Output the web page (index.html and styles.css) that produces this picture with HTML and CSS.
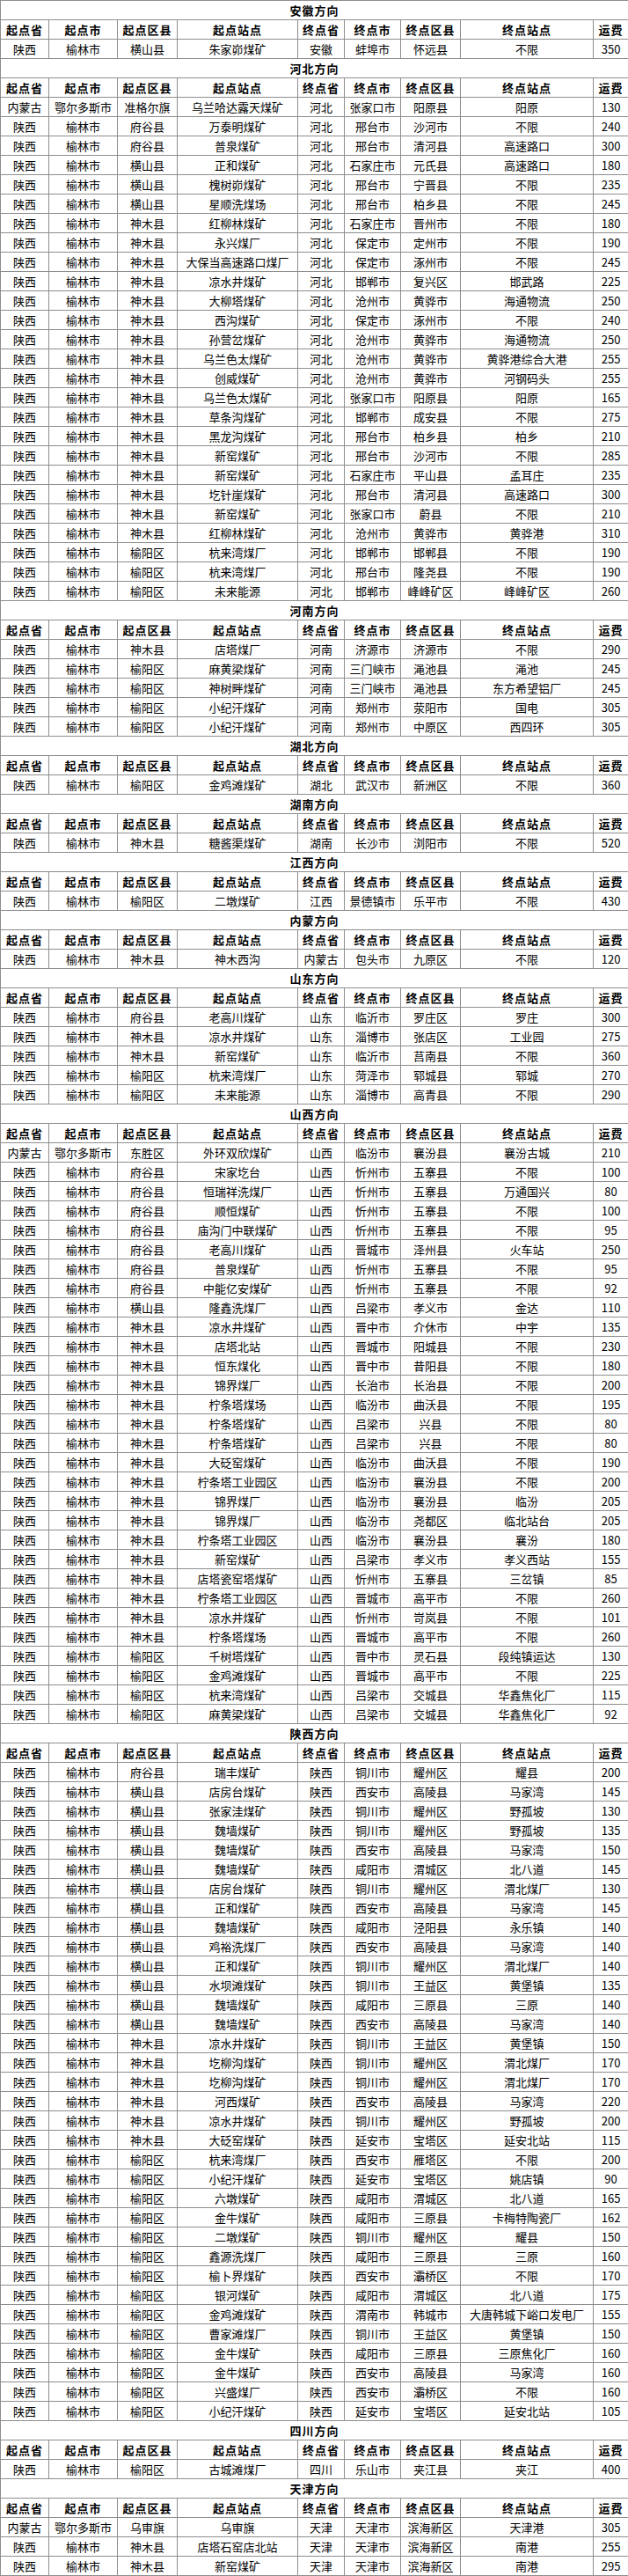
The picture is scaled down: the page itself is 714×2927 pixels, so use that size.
FILE: index.html
```html
<!DOCTYPE html>
<html lang="zh-CN">
<head>
<meta charset="utf-8">
<title>运费表</title>
<link rel="stylesheet" href="styles.css">
</head>
<body>
<table class="freight">
<colgroup>
<col class="c-prov"><col class="c-city"><col class="c-county"><col class="c-site"><col class="c-eprov"><col class="c-ecity"><col class="c-ecounty"><col class="c-esite"><col class="c-fee">
</colgroup>
<tbody>
<tr class="title"><td colspan="9">安徽方向</td></tr>
<tr class="head"><th>起点省</th><th>起点市</th><th>起点区县</th><th>起点站点</th><th>终点省</th><th>终点市</th><th>终点区县</th><th>终点站点</th><th>运费</th></tr>
<tr><td>陕西</td><td>榆林市</td><td>横山县</td><td>朱家峁煤矿</td><td>安徽</td><td>蚌埠市</td><td>怀远县</td><td>不限</td><td>350</td></tr>

<tr class="title"><td colspan="9">河北方向</td></tr>
<tr class="head"><th>起点省</th><th>起点市</th><th>起点区县</th><th>起点站点</th><th>终点省</th><th>终点市</th><th>终点区县</th><th>终点站点</th><th>运费</th></tr>
<tr><td>内蒙古</td><td>鄂尔多斯市</td><td>准格尔旗</td><td>乌兰哈达露天煤矿</td><td>河北</td><td>张家口市</td><td>阳原县</td><td>阳原</td><td>130</td></tr>
<tr><td>陕西</td><td>榆林市</td><td>府谷县</td><td>万泰明煤矿</td><td>河北</td><td>邢台市</td><td>沙河市</td><td>不限</td><td>240</td></tr>
<tr><td>陕西</td><td>榆林市</td><td>府谷县</td><td>普泉煤矿</td><td>河北</td><td>邢台市</td><td>清河县</td><td>高速路口</td><td>300</td></tr>
<tr><td>陕西</td><td>榆林市</td><td>横山县</td><td>正和煤矿</td><td>河北</td><td>石家庄市</td><td>元氏县</td><td>高速路口</td><td>180</td></tr>
<tr><td>陕西</td><td>榆林市</td><td>横山县</td><td>槐树峁煤矿</td><td>河北</td><td>邢台市</td><td>宁晋县</td><td>不限</td><td>235</td></tr>
<tr><td>陕西</td><td>榆林市</td><td>横山县</td><td>星顺洗煤场</td><td>河北</td><td>邢台市</td><td>柏乡县</td><td>不限</td><td>245</td></tr>
<tr><td>陕西</td><td>榆林市</td><td>神木县</td><td>红柳林煤矿</td><td>河北</td><td>石家庄市</td><td>晋州市</td><td>不限</td><td>180</td></tr>
<tr><td>陕西</td><td>榆林市</td><td>神木县</td><td>永兴煤厂</td><td>河北</td><td>保定市</td><td>定州市</td><td>不限</td><td>190</td></tr>
<tr><td>陕西</td><td>榆林市</td><td>神木县</td><td>大保当高速路口煤厂</td><td>河北</td><td>保定市</td><td>涿州市</td><td>不限</td><td>245</td></tr>
<tr><td>陕西</td><td>榆林市</td><td>神木县</td><td>凉水井煤矿</td><td>河北</td><td>邯郸市</td><td>复兴区</td><td>邯武路</td><td>225</td></tr>
<tr><td>陕西</td><td>榆林市</td><td>神木县</td><td>大柳塔煤矿</td><td>河北</td><td>沧州市</td><td>黄骅市</td><td>海通物流</td><td>250</td></tr>
<tr><td>陕西</td><td>榆林市</td><td>神木县</td><td>西沟煤矿</td><td>河北</td><td>保定市</td><td>涿州市</td><td>不限</td><td>240</td></tr>
<tr><td>陕西</td><td>榆林市</td><td>神木县</td><td>孙营岔煤矿</td><td>河北</td><td>沧州市</td><td>黄骅市</td><td>海通物流</td><td>250</td></tr>
<tr><td>陕西</td><td>榆林市</td><td>神木县</td><td>乌兰色太煤矿</td><td>河北</td><td>沧州市</td><td>黄骅市</td><td>黄骅港综合大港</td><td>255</td></tr>
<tr><td>陕西</td><td>榆林市</td><td>神木县</td><td>创威煤矿</td><td>河北</td><td>沧州市</td><td>黄骅市</td><td>河钢码头</td><td>255</td></tr>
<tr><td>陕西</td><td>榆林市</td><td>神木县</td><td>乌兰色太煤矿</td><td>河北</td><td>张家口市</td><td>阳原县</td><td>阳原</td><td>165</td></tr>
<tr><td>陕西</td><td>榆林市</td><td>神木县</td><td>草条沟煤矿</td><td>河北</td><td>邯郸市</td><td>成安县</td><td>不限</td><td>275</td></tr>
<tr><td>陕西</td><td>榆林市</td><td>神木县</td><td>黑龙沟煤矿</td><td>河北</td><td>邢台市</td><td>柏乡县</td><td>柏乡</td><td>210</td></tr>
<tr><td>陕西</td><td>榆林市</td><td>神木县</td><td>新窑煤矿</td><td>河北</td><td>邢台市</td><td>沙河市</td><td>不限</td><td>285</td></tr>
<tr><td>陕西</td><td>榆林市</td><td>神木县</td><td>新窑煤矿</td><td>河北</td><td>石家庄市</td><td>平山县</td><td>孟耳庄</td><td>235</td></tr>
<tr><td>陕西</td><td>榆林市</td><td>神木县</td><td>圪针崖煤矿</td><td>河北</td><td>邢台市</td><td>清河县</td><td>高速路口</td><td>300</td></tr>
<tr><td>陕西</td><td>榆林市</td><td>神木县</td><td>新窑煤矿</td><td>河北</td><td>张家口市</td><td>蔚县</td><td>不限</td><td>210</td></tr>
<tr><td>陕西</td><td>榆林市</td><td>神木县</td><td>红柳林煤矿</td><td>河北</td><td>沧州市</td><td>黄骅市</td><td>黄骅港</td><td>310</td></tr>
<tr><td>陕西</td><td>榆林市</td><td>榆阳区</td><td>杭来湾煤厂</td><td>河北</td><td>邯郸市</td><td>邯郸县</td><td>不限</td><td>190</td></tr>
<tr><td>陕西</td><td>榆林市</td><td>榆阳区</td><td>杭来湾煤厂</td><td>河北</td><td>邢台市</td><td>隆尧县</td><td>不限</td><td>190</td></tr>
<tr><td>陕西</td><td>榆林市</td><td>榆阳区</td><td>未来能源</td><td>河北</td><td>邯郸市</td><td>峰峰矿区</td><td>峰峰矿区</td><td>260</td></tr>

<tr class="title"><td colspan="9">河南方向</td></tr>
<tr class="head"><th>起点省</th><th>起点市</th><th>起点区县</th><th>起点站点</th><th>终点省</th><th>终点市</th><th>终点区县</th><th>终点站点</th><th>运费</th></tr>
<tr><td>陕西</td><td>榆林市</td><td>神木县</td><td>店塔煤厂</td><td>河南</td><td>济源市</td><td>济源市</td><td>不限</td><td>290</td></tr>
<tr><td>陕西</td><td>榆林市</td><td>榆阳区</td><td>麻黄梁煤矿</td><td>河南</td><td>三门峡市</td><td>渑池县</td><td>渑池</td><td>245</td></tr>
<tr><td>陕西</td><td>榆林市</td><td>榆阳区</td><td>神树畔煤矿</td><td>河南</td><td>三门峡市</td><td>渑池县</td><td>东方希望铝厂</td><td>245</td></tr>
<tr><td>陕西</td><td>榆林市</td><td>榆阳区</td><td>小纪汗煤矿</td><td>河南</td><td>郑州市</td><td>荥阳市</td><td>国电</td><td>305</td></tr>
<tr><td>陕西</td><td>榆林市</td><td>榆阳区</td><td>小纪汗煤矿</td><td>河南</td><td>郑州市</td><td>中原区</td><td>西四环</td><td>305</td></tr>

<tr class="title"><td colspan="9">湖北方向</td></tr>
<tr class="head"><th>起点省</th><th>起点市</th><th>起点区县</th><th>起点站点</th><th>终点省</th><th>终点市</th><th>终点区县</th><th>终点站点</th><th>运费</th></tr>
<tr><td>陕西</td><td>榆林市</td><td>榆阳区</td><td>金鸡滩煤矿</td><td>湖北</td><td>武汉市</td><td>新洲区</td><td>不限</td><td>360</td></tr>

<tr class="title"><td colspan="9">湖南方向</td></tr>
<tr class="head"><th>起点省</th><th>起点市</th><th>起点区县</th><th>起点站点</th><th>终点省</th><th>终点市</th><th>终点区县</th><th>终点站点</th><th>运费</th></tr>
<tr><td>陕西</td><td>榆林市</td><td>神木县</td><td>糖酱渠煤矿</td><td>湖南</td><td>长沙市</td><td>浏阳市</td><td>不限</td><td>520</td></tr>

<tr class="title"><td colspan="9">江西方向</td></tr>
<tr class="head"><th>起点省</th><th>起点市</th><th>起点区县</th><th>起点站点</th><th>终点省</th><th>终点市</th><th>终点区县</th><th>终点站点</th><th>运费</th></tr>
<tr><td>陕西</td><td>榆林市</td><td>榆阳区</td><td>二墩煤矿</td><td>江西</td><td>景德镇市</td><td>乐平市</td><td>不限</td><td>430</td></tr>

<tr class="title"><td colspan="9">内蒙方向</td></tr>
<tr class="head"><th>起点省</th><th>起点市</th><th>起点区县</th><th>起点站点</th><th>终点省</th><th>终点市</th><th>终点区县</th><th>终点站点</th><th>运费</th></tr>
<tr><td>陕西</td><td>榆林市</td><td>神木县</td><td>神木西沟</td><td>内蒙古</td><td>包头市</td><td>九原区</td><td>不限</td><td>120</td></tr>

<tr class="title"><td colspan="9">山东方向</td></tr>
<tr class="head"><th>起点省</th><th>起点市</th><th>起点区县</th><th>起点站点</th><th>终点省</th><th>终点市</th><th>终点区县</th><th>终点站点</th><th>运费</th></tr>
<tr><td>陕西</td><td>榆林市</td><td>府谷县</td><td>老高川煤矿</td><td>山东</td><td>临沂市</td><td>罗庄区</td><td>罗庄</td><td>300</td></tr>
<tr><td>陕西</td><td>榆林市</td><td>神木县</td><td>凉水井煤矿</td><td>山东</td><td>淄博市</td><td>张店区</td><td>工业园</td><td>275</td></tr>
<tr><td>陕西</td><td>榆林市</td><td>神木县</td><td>新窑煤矿</td><td>山东</td><td>临沂市</td><td>莒南县</td><td>不限</td><td>360</td></tr>
<tr><td>陕西</td><td>榆林市</td><td>榆阳区</td><td>杭来湾煤厂</td><td>山东</td><td>菏泽市</td><td>郓城县</td><td>郓城</td><td>270</td></tr>
<tr><td>陕西</td><td>榆林市</td><td>榆阳区</td><td>未来能源</td><td>山东</td><td>淄博市</td><td>高青县</td><td>不限</td><td>290</td></tr>

<tr class="title"><td colspan="9">山西方向</td></tr>
<tr class="head"><th>起点省</th><th>起点市</th><th>起点区县</th><th>起点站点</th><th>终点省</th><th>终点市</th><th>终点区县</th><th>终点站点</th><th>运费</th></tr>
<tr><td>内蒙古</td><td>鄂尔多斯市</td><td>东胜区</td><td>外环双欣煤矿</td><td>山西</td><td>临汾市</td><td>襄汾县</td><td>襄汾古城</td><td>210</td></tr>
<tr><td>陕西</td><td>榆林市</td><td>府谷县</td><td>宋家圪台</td><td>山西</td><td>忻州市</td><td>五寨县</td><td>不限</td><td>100</td></tr>
<tr><td>陕西</td><td>榆林市</td><td>府谷县</td><td>恒瑞祥洗煤厂</td><td>山西</td><td>忻州市</td><td>五寨县</td><td>万通国兴</td><td>80</td></tr>
<tr><td>陕西</td><td>榆林市</td><td>府谷县</td><td>顺恒煤矿</td><td>山西</td><td>忻州市</td><td>五寨县</td><td>不限</td><td>100</td></tr>
<tr><td>陕西</td><td>榆林市</td><td>府谷县</td><td>庙沟门中联煤矿</td><td>山西</td><td>忻州市</td><td>五寨县</td><td>不限</td><td>95</td></tr>
<tr><td>陕西</td><td>榆林市</td><td>府谷县</td><td>老高川煤矿</td><td>山西</td><td>晋城市</td><td>泽州县</td><td>火车站</td><td>250</td></tr>
<tr><td>陕西</td><td>榆林市</td><td>府谷县</td><td>普泉煤矿</td><td>山西</td><td>忻州市</td><td>五寨县</td><td>不限</td><td>95</td></tr>
<tr><td>陕西</td><td>榆林市</td><td>府谷县</td><td>中能亿安煤矿</td><td>山西</td><td>忻州市</td><td>五寨县</td><td>不限</td><td>92</td></tr>
<tr><td>陕西</td><td>榆林市</td><td>横山县</td><td>隆鑫洗煤厂</td><td>山西</td><td>吕梁市</td><td>孝义市</td><td>金达</td><td>110</td></tr>
<tr><td>陕西</td><td>榆林市</td><td>神木县</td><td>凉水井煤矿</td><td>山西</td><td>晋中市</td><td>介休市</td><td>中宇</td><td>135</td></tr>
<tr><td>陕西</td><td>榆林市</td><td>神木县</td><td>店塔北站</td><td>山西</td><td>晋城市</td><td>阳城县</td><td>不限</td><td>230</td></tr>
<tr><td>陕西</td><td>榆林市</td><td>神木县</td><td>恒东煤化</td><td>山西</td><td>晋中市</td><td>昔阳县</td><td>不限</td><td>180</td></tr>
<tr><td>陕西</td><td>榆林市</td><td>神木县</td><td>锦界煤厂</td><td>山西</td><td>长治市</td><td>长治县</td><td>不限</td><td>200</td></tr>
<tr><td>陕西</td><td>榆林市</td><td>神木县</td><td>柠条塔煤场</td><td>山西</td><td>临汾市</td><td>曲沃县</td><td>不限</td><td>195</td></tr>
<tr><td>陕西</td><td>榆林市</td><td>神木县</td><td>柠条塔煤矿</td><td>山西</td><td>吕梁市</td><td>兴县</td><td>不限</td><td>80</td></tr>
<tr><td>陕西</td><td>榆林市</td><td>神木县</td><td>柠条塔煤矿</td><td>山西</td><td>吕梁市</td><td>兴县</td><td>不限</td><td>80</td></tr>
<tr><td>陕西</td><td>榆林市</td><td>神木县</td><td>大砭窑煤矿</td><td>山西</td><td>临汾市</td><td>曲沃县</td><td>不限</td><td>190</td></tr>
<tr><td>陕西</td><td>榆林市</td><td>神木县</td><td>柠条塔工业园区</td><td>山西</td><td>临汾市</td><td>襄汾县</td><td>不限</td><td>200</td></tr>
<tr><td>陕西</td><td>榆林市</td><td>神木县</td><td>锦界煤厂</td><td>山西</td><td>临汾市</td><td>襄汾县</td><td>临汾</td><td>205</td></tr>
<tr><td>陕西</td><td>榆林市</td><td>神木县</td><td>锦界煤厂</td><td>山西</td><td>临汾市</td><td>尧都区</td><td>临北站台</td><td>205</td></tr>
<tr><td>陕西</td><td>榆林市</td><td>神木县</td><td>柠条塔工业园区</td><td>山西</td><td>临汾市</td><td>襄汾县</td><td>襄汾</td><td>180</td></tr>
<tr><td>陕西</td><td>榆林市</td><td>神木县</td><td>新窑煤矿</td><td>山西</td><td>吕梁市</td><td>孝义市</td><td>孝义西站</td><td>155</td></tr>
<tr><td>陕西</td><td>榆林市</td><td>神木县</td><td>店塔瓷窑塔煤矿</td><td>山西</td><td>忻州市</td><td>五寨县</td><td>三岔镇</td><td>85</td></tr>
<tr><td>陕西</td><td>榆林市</td><td>神木县</td><td>柠条塔工业园区</td><td>山西</td><td>晋城市</td><td>高平市</td><td>不限</td><td>260</td></tr>
<tr><td>陕西</td><td>榆林市</td><td>神木县</td><td>凉水井煤矿</td><td>山西</td><td>忻州市</td><td>岢岚县</td><td>不限</td><td>101</td></tr>
<tr><td>陕西</td><td>榆林市</td><td>神木县</td><td>柠条塔煤场</td><td>山西</td><td>晋城市</td><td>高平市</td><td>不限</td><td>260</td></tr>
<tr><td>陕西</td><td>榆林市</td><td>榆阳区</td><td>千树塔煤矿</td><td>山西</td><td>晋中市</td><td>灵石县</td><td>段纯镇运达</td><td>130</td></tr>
<tr><td>陕西</td><td>榆林市</td><td>榆阳区</td><td>金鸡滩煤矿</td><td>山西</td><td>晋城市</td><td>高平市</td><td>不限</td><td>225</td></tr>
<tr><td>陕西</td><td>榆林市</td><td>榆阳区</td><td>杭来湾煤矿</td><td>山西</td><td>吕梁市</td><td>交城县</td><td>华鑫焦化厂</td><td>115</td></tr>
<tr><td>陕西</td><td>榆林市</td><td>榆阳区</td><td>麻黄梁煤矿</td><td>山西</td><td>吕梁市</td><td>交城县</td><td>华鑫焦化厂</td><td>92</td></tr>

<tr class="title"><td colspan="9">陕西方向</td></tr>
<tr class="head"><th>起点省</th><th>起点市</th><th>起点区县</th><th>起点站点</th><th>终点省</th><th>终点市</th><th>终点区县</th><th>终点站点</th><th>运费</th></tr>
<tr><td>陕西</td><td>榆林市</td><td>府谷县</td><td>瑞丰煤矿</td><td>陕西</td><td>铜川市</td><td>耀州区</td><td>耀县</td><td>200</td></tr>
<tr><td>陕西</td><td>榆林市</td><td>横山县</td><td>店房台煤矿</td><td>陕西</td><td>西安市</td><td>高陵县</td><td>马家湾</td><td>145</td></tr>
<tr><td>陕西</td><td>榆林市</td><td>横山县</td><td>张家洼煤矿</td><td>陕西</td><td>铜川市</td><td>耀州区</td><td>野孤坡</td><td>130</td></tr>
<tr><td>陕西</td><td>榆林市</td><td>横山县</td><td>魏墙煤矿</td><td>陕西</td><td>铜川市</td><td>耀州区</td><td>野孤坡</td><td>135</td></tr>
<tr><td>陕西</td><td>榆林市</td><td>横山县</td><td>魏墙煤矿</td><td>陕西</td><td>西安市</td><td>高陵县</td><td>马家湾</td><td>150</td></tr>
<tr><td>陕西</td><td>榆林市</td><td>横山县</td><td>魏墙煤矿</td><td>陕西</td><td>咸阳市</td><td>渭城区</td><td>北八道</td><td>145</td></tr>
<tr><td>陕西</td><td>榆林市</td><td>横山县</td><td>店房台煤矿</td><td>陕西</td><td>铜川市</td><td>耀州区</td><td>渭北煤厂</td><td>130</td></tr>
<tr><td>陕西</td><td>榆林市</td><td>横山县</td><td>正和煤矿</td><td>陕西</td><td>西安市</td><td>高陵县</td><td>马家湾</td><td>145</td></tr>
<tr><td>陕西</td><td>榆林市</td><td>横山县</td><td>魏墙煤矿</td><td>陕西</td><td>咸阳市</td><td>泾阳县</td><td>永乐镇</td><td>140</td></tr>
<tr><td>陕西</td><td>榆林市</td><td>横山县</td><td>鸡裕洗煤厂</td><td>陕西</td><td>西安市</td><td>高陵县</td><td>马家湾</td><td>140</td></tr>
<tr><td>陕西</td><td>榆林市</td><td>横山县</td><td>正和煤矿</td><td>陕西</td><td>铜川市</td><td>耀州区</td><td>渭北煤厂</td><td>140</td></tr>
<tr><td>陕西</td><td>榆林市</td><td>横山县</td><td>水坝滩煤矿</td><td>陕西</td><td>铜川市</td><td>王益区</td><td>黄堡镇</td><td>135</td></tr>
<tr><td>陕西</td><td>榆林市</td><td>横山县</td><td>魏墙煤矿</td><td>陕西</td><td>咸阳市</td><td>三原县</td><td>三原</td><td>140</td></tr>
<tr><td>陕西</td><td>榆林市</td><td>横山县</td><td>魏墙煤矿</td><td>陕西</td><td>西安市</td><td>高陵县</td><td>马家湾</td><td>140</td></tr>
<tr><td>陕西</td><td>榆林市</td><td>神木县</td><td>凉水井煤矿</td><td>陕西</td><td>铜川市</td><td>王益区</td><td>黄堡镇</td><td>150</td></tr>
<tr><td>陕西</td><td>榆林市</td><td>神木县</td><td>圪柳沟煤矿</td><td>陕西</td><td>铜川市</td><td>耀州区</td><td>渭北煤厂</td><td>170</td></tr>
<tr><td>陕西</td><td>榆林市</td><td>神木县</td><td>圪柳沟煤矿</td><td>陕西</td><td>铜川市</td><td>耀州区</td><td>渭北煤厂</td><td>170</td></tr>
<tr><td>陕西</td><td>榆林市</td><td>神木县</td><td>河西煤矿</td><td>陕西</td><td>西安市</td><td>高陵县</td><td>马家湾</td><td>220</td></tr>
<tr><td>陕西</td><td>榆林市</td><td>神木县</td><td>凉水井煤矿</td><td>陕西</td><td>铜川市</td><td>耀州区</td><td>野孤坡</td><td>200</td></tr>
<tr><td>陕西</td><td>榆林市</td><td>神木县</td><td>大砭窑煤矿</td><td>陕西</td><td>延安市</td><td>宝塔区</td><td>延安北站</td><td>115</td></tr>
<tr><td>陕西</td><td>榆林市</td><td>榆阳区</td><td>杭来湾煤厂</td><td>陕西</td><td>西安市</td><td>雁塔区</td><td>不限</td><td>200</td></tr>
<tr><td>陕西</td><td>榆林市</td><td>榆阳区</td><td>小纪汗煤矿</td><td>陕西</td><td>延安市</td><td>宝塔区</td><td>姚店镇</td><td>90</td></tr>
<tr><td>陕西</td><td>榆林市</td><td>榆阳区</td><td>六墩煤矿</td><td>陕西</td><td>咸阳市</td><td>渭城区</td><td>北八道</td><td>165</td></tr>
<tr><td>陕西</td><td>榆林市</td><td>榆阳区</td><td>金牛煤矿</td><td>陕西</td><td>咸阳市</td><td>三原县</td><td>卡梅特陶瓷厂</td><td>162</td></tr>
<tr><td>陕西</td><td>榆林市</td><td>榆阳区</td><td>二墩煤矿</td><td>陕西</td><td>铜川市</td><td>耀州区</td><td>耀县</td><td>150</td></tr>
<tr><td>陕西</td><td>榆林市</td><td>榆阳区</td><td>鑫源洗煤厂</td><td>陕西</td><td>咸阳市</td><td>三原县</td><td>三原</td><td>160</td></tr>
<tr><td>陕西</td><td>榆林市</td><td>榆阳区</td><td>榆卜界煤矿</td><td>陕西</td><td>西安市</td><td>灞桥区</td><td>不限</td><td>170</td></tr>
<tr><td>陕西</td><td>榆林市</td><td>榆阳区</td><td>银河煤矿</td><td>陕西</td><td>咸阳市</td><td>渭城区</td><td>北八道</td><td>175</td></tr>
<tr><td>陕西</td><td>榆林市</td><td>榆阳区</td><td>金鸡滩煤矿</td><td>陕西</td><td>渭南市</td><td>韩城市</td><td>大唐韩城下峪口发电厂</td><td>155</td></tr>
<tr><td>陕西</td><td>榆林市</td><td>榆阳区</td><td>曹家滩煤厂</td><td>陕西</td><td>铜川市</td><td>王益区</td><td>黄堡镇</td><td>150</td></tr>
<tr><td>陕西</td><td>榆林市</td><td>榆阳区</td><td>金牛煤矿</td><td>陕西</td><td>咸阳市</td><td>三原县</td><td>三原焦化厂</td><td>160</td></tr>
<tr><td>陕西</td><td>榆林市</td><td>榆阳区</td><td>金牛煤矿</td><td>陕西</td><td>西安市</td><td>高陵县</td><td>马家湾</td><td>160</td></tr>
<tr><td>陕西</td><td>榆林市</td><td>榆阳区</td><td>兴盛煤厂</td><td>陕西</td><td>西安市</td><td>灞桥区</td><td>不限</td><td>160</td></tr>
<tr><td>陕西</td><td>榆林市</td><td>榆阳区</td><td>小纪汗煤矿</td><td>陕西</td><td>延安市</td><td>宝塔区</td><td>延安北站</td><td>105</td></tr>

<tr class="title"><td colspan="9">四川方向</td></tr>
<tr class="head"><th>起点省</th><th>起点市</th><th>起点区县</th><th>起点站点</th><th>终点省</th><th>终点市</th><th>终点区县</th><th>终点站点</th><th>运费</th></tr>
<tr><td>陕西</td><td>榆林市</td><td>榆阳区</td><td>古城滩煤厂</td><td>四川</td><td>乐山市</td><td>夹江县</td><td>夹江</td><td>400</td></tr>

<tr class="title"><td colspan="9">天津方向</td></tr>
<tr class="head"><th>起点省</th><th>起点市</th><th>起点区县</th><th>起点站点</th><th>终点省</th><th>终点市</th><th>终点区县</th><th>终点站点</th><th>运费</th></tr>
<tr><td>内蒙古</td><td>鄂尔多斯市</td><td>乌审旗</td><td>乌审旗</td><td>天津</td><td>天津市</td><td>滨海新区</td><td>天津港</td><td>305</td></tr>
<tr><td>陕西</td><td>榆林市</td><td>神木县</td><td>店塔石窑店北站</td><td>天津</td><td>天津市</td><td>滨海新区</td><td>南港</td><td>255</td></tr>
<tr><td>陕西</td><td>榆林市</td><td>神木县</td><td>新窑煤矿</td><td>天津</td><td>天津市</td><td>滨海新区</td><td>南港</td><td>295</td></tr>
</tbody>
</table>
</body>
</html>
```
FILE: styles.css
```css
html, body {
  margin: 0;
  padding: 0;
  background: #ffffff;
}

body {
  font-family: "Noto Sans CJK SC", "Liberation Sans", sans-serif;
  font-size: 13px;
  color: #000000;
}

.freight {
  width: 714px;
  table-layout: fixed;
  border-collapse: collapse;
}

.c-prov { width: 55px; }
.c-city { width: 78px; }
.c-county { width: 68px; }
.c-site { width: 137px; }
.c-eprov { width: 53px; }
.c-ecity { width: 64px; }
.c-ecounty { width: 68px; }
.c-esite { width: 151px; }
.c-fee { width: 40px; }

.freight tr {
  height: 22px;
}

.freight td,
.freight th {
  border: 1px solid #8e8e8e;
  padding: 0;
  height: 21px;
  line-height: 16px;
  text-align: center;
  vertical-align: middle;
  white-space: nowrap;
  overflow: hidden;
  font-weight: normal;
}

.freight .head th {
  font-weight: bold;
  letter-spacing: 1px;
}

.freight .title td {
  font-weight: bold;
  letter-spacing: 1px;
}
```
